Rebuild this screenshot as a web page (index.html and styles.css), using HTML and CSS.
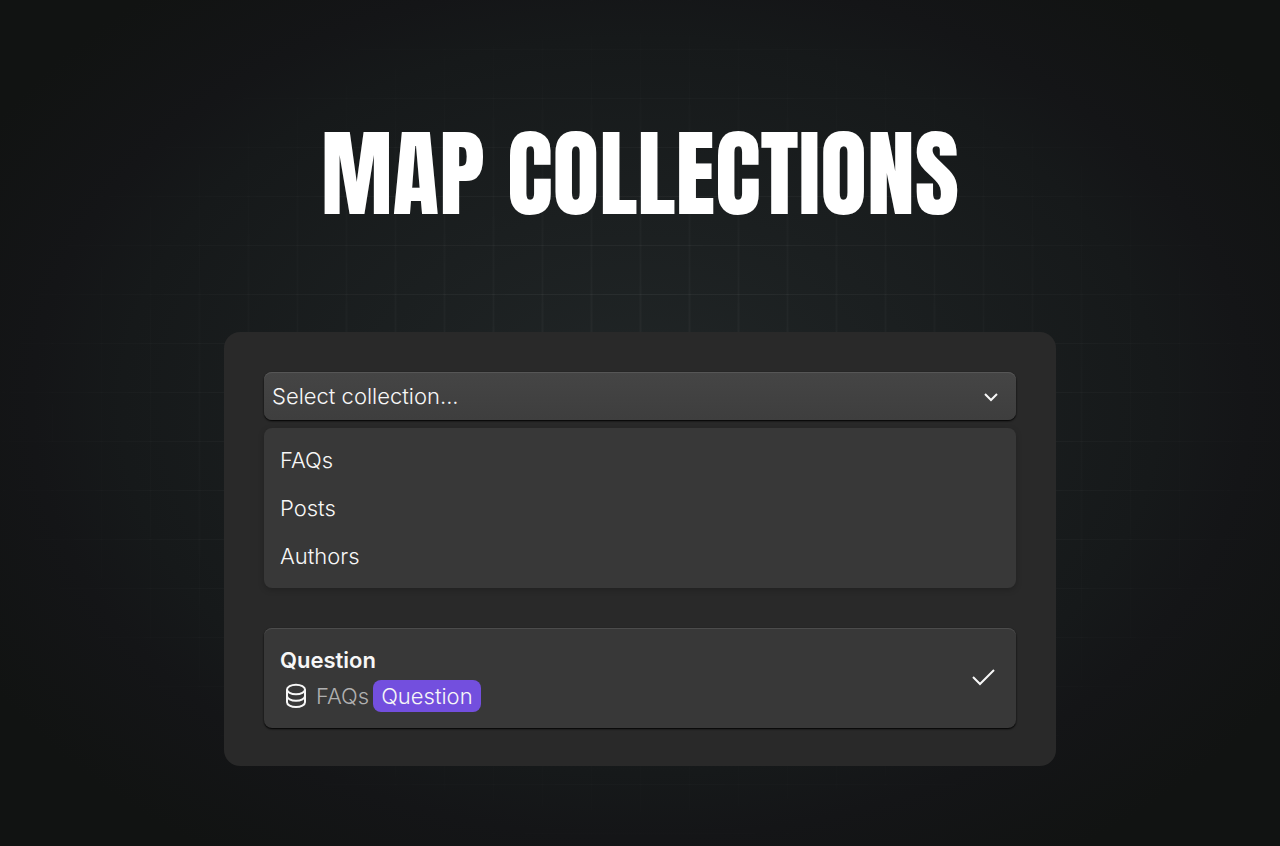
FILE: index.html
```
<!DOCTYPE html>
<html lang="en">
<head>
<meta charset="UTF-8">
<meta name="viewport" content="width=device-width, initial-scale=1.0">
<title>Map Collections</title>
<link rel="stylesheet" href="styles.css">
</head>
<body>
<main class="page">
    <h1 class="title">Map Collections</h1>

    <section class="panel">
        <div class="select-wrap">
            <select class="select" id="collection" aria-label="Collection">
                <option>Select collection...</option>
            </select>
            <svg class="chevron" viewBox="0 0 24 24" aria-hidden="true">
                <path d="M5 10l6 6 6-6"/>
            </svg>
        </div>

        <ul class="menu">
            <li><button type="button" class="menu-item">FAQs</button></li>
            <li><button type="button" class="menu-item">Posts</button></li>
            <li><button type="button" class="menu-item">Authors</button></li>
        </ul>

        <div class="card">
            <div class="card-body">
                <h2 class="card-title">Question</h2>
                <div class="mapping">
                    <svg class="db-icon" viewBox="0 0 24 26" aria-hidden="true">
                        <ellipse cx="12" cy="6.5" rx="9" ry="4.8"/>
                        <path d="M3 6.5v12.8c0 2.6 4 4.8 9 4.8s9-2.2 9-4.8V6.5"/>
                        <path d="M3 13c0 2.6 4 4.8 9 4.8s9-2.2 9-4.8"/>
                    </svg>
                    <span class="source">FAQs</span>
                    <span class="tag">Question</span>
                </div>
            </div>
            <svg class="check" viewBox="0 0 24 24" aria-hidden="true">
                <path d="M1 11l7 7L22 4"/>
            </svg>
        </div>
    </section>
</main>
</body>
</html>
```

FILE: styles.css
```
* {
    box-sizing: border-box;
}

body {
    margin: 0;
    font-family: Inter, "Liberation Sans", sans-serif;
    font-size: 22px;
    font-weight: 350;
    line-height: 32px;
    color: #f7f7f7;
    background-color: #111312;
}

.page {
    position: relative;
    min-height: 100vh;
    padding: 82px 24px 80px;
    display: flex;
    flex-direction: column;
    align-items: center;
    gap: 66px;
    background: radial-gradient(ellipse 54% 58% at 50% 48%, #212627 0%, #1b1f20 40%, #16191a 75%, #141517 88%, #111312 110%);
}

/* faint grid, faded out towards the edges */
.page::before {
    content: "";
    position: absolute;
    inset: 0;
    background-image:
        linear-gradient(to right, rgba(255, 255, 255, 0.03) 2px, transparent 2px),
        linear-gradient(to bottom, rgba(255, 255, 255, 0.055) 1px, transparent 1px);
    background-size: 49px 49px;
    background-position: calc(50% + 24px) 0;
    -webkit-mask-image: radial-gradient(ellipse 54% 54% at 50% 50%, #000 20%, transparent 100%);
    mask-image: radial-gradient(ellipse 54% 54% at 50% 50%, #000 20%, transparent 100%);
}

.title {
    position: relative;
    margin: 0;
    font-family: Anton, Impact, "Liberation Sans Narrow", "Liberation Sans", sans-serif;
    font-size: 96px;
    font-weight: 400;
    line-height: 184px;
    text-transform: uppercase;
    white-space: nowrap;
    color: #fff;
}

.panel {
    position: relative;
    width: 100%;
    max-width: 832px;
    padding: 40px 40px 38px;
    border-radius: 16px;
    background-color: #292929;
}

.select-wrap {
    position: relative;
}

.select {
    display: block;
    width: 100%;
    height: 48px;
    padding: 0 48px 0 8px;
    border: none;
    border-radius: 8px;
    appearance: none;
    font: inherit;
    color: inherit;
    background: linear-gradient(#454545, #3e3e3e);
    box-shadow: inset 0 1px 0 #565656, 0 1px 2px #000;
}

.chevron {
    position: absolute;
    top: 12px;
    right: 12px;
    width: 24px;
    height: 24px;
    pointer-events: none;
}

.menu {
    margin: 8px 0 40px;
    padding: 8px;
    list-style: none;
    border-radius: 8px;
    background-color: #383838;
    box-shadow: 0 2px 6px rgba(0, 0, 0, 0.2);
}

.menu-item {
    display: block;
    width: 100%;
    height: 48px;
    padding: 0 8px;
    border: none;
    border-radius: 4px;
    font: inherit;
    color: inherit;
    text-align: left;
    background: none;
    cursor: pointer;
}

.card {
    display: flex;
    align-items: center;
    justify-content: space-between;
    padding: 16px 20px 16px 16px;
    border-radius: 8px;
    background-color: #383838;
    box-shadow: inset 0 1px 0 #4c4c4c, 0 1px 2px #000;
}

.card-title {
    margin: 0 0 4px;
    font-size: 22px;
    font-weight: 600;
    line-height: 32px;
}

.mapping {
    display: flex;
    align-items: center;
    gap: 4px;
}

.source {
    color: #b0b0b0;
}

.tag {
    padding: 0 8px;
    border-radius: 8px;
    background-color: #734fde;
}

.chevron path,
.check path,
.db-icon {
    fill: none;
    stroke: #f7f7f7;
    stroke-width: 2;
}

.db-icon {
    width: 24px;
    height: 26px;
    margin: 0 4px;
}

.check {
    width: 24px;
    height: 24px;
}
```
